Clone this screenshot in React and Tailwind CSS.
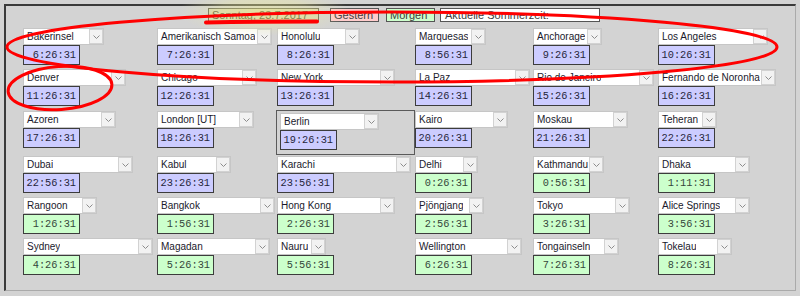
import React from 'react';

const B = 'blue';
const G = 'green';

const rows = [
  [
    ['Bakerinsel', 'w-[81px]', '6:26:31', B],
    ['Amerikanisch Samoa', 'w-[115px]', '7:26:31', B],
    ['Honolulu', 'w-[83px]', '8:26:31', B],
    ['Marquesas', 'w-[71px]', '8:56:31', B],
    ['Anchorage', 'w-[69px]', '9:26:31', B],
    ['Los Angeles', 'w-[110px]', '10:26:31', B],
  ],
  [
    ['Denver', 'w-[103px]', '11:26:31', B],
    ['Chicago', 'w-[100px]', '12:26:31', B],
    ['New York', 'w-[118px]', '13:26:31', B],
    ['La Paz', 'w-[115px]', '14:26:31', B],
    ['Rio de Janeiro', 'w-[121px]', '15:26:31', B],
    ['Fernando de Noronha', 'w-[118px]', '16:26:31', B],
  ],
  [
    ['Azoren', 'w-[93px]', '17:26:31', B],
    ['London [UT]', 'w-[97px]', '18:26:31', B],
    ['Berlin', 'w-[99px]', '19:26:31', B, true],
    ['Kairo', 'w-[93px]', '20:26:31', B],
    ['Moskau', 'w-[95px]', '21:26:31', B],
    ['Teheran', 'w-[59px]', '22:26:31', B],
  ],
  [
    ['Dubai', 'w-[110px]', '22:56:31', B],
    ['Kabul', 'w-[74px]', '23:26:31', B],
    ['Karachi', 'w-[134px]', '23:56:31', B],
    ['Delhi', 'w-[63px]', '0:26:31', G],
    ['Kathmandu', 'w-[71px]', '0:56:31', G],
    ['Dhaka', 'w-[92px]', '1:11:31', G],
  ],
  [
    ['Rangoon', 'w-[74px]', '1:26:31', G],
    ['Bangkok', 'w-[118px]', '1:56:31', G],
    ['Hong Kong', 'w-[118px]', '2:26:31', G],
    ['Pjöngjang', 'w-[69px]', '2:56:31', G],
    ['Tokyo', 'w-[97px]', '3:26:31', G],
    ['Alice Springs', 'w-[92px]', '3:56:31', G],
  ],
  [
    ['Sydney', 'w-[130px]', '4:26:31', G],
    ['Magadan', 'w-[113px]', '5:26:31', G],
    ['Nauru', 'w-[49px]', '5:56:31', G],
    ['Wellington', 'w-[107px]', '6:26:31', G],
    ['Tongainseln', 'w-[86px]', '7:26:31', G],
    ['Tokelau', 'w-[74px]', '8:26:31', G],
  ],
];

function Combo({ name, w }) {
  return (
    <div className={`flex h-[17px] items-center justify-between border border-[#c6c6c6] bg-white ${w}`}>
      <span className="overflow-hidden whitespace-nowrap pl-[3px] text-[10px] leading-none text-[#1a1a2c]">{name}</span>
      <span className="flex h-[15px] w-[14px] shrink-0 items-center justify-center border border-[#d2d2d2] bg-[#f2f2f2]">
        <svg width="7" height="4" viewBox="0 0 7 4">
          <path d="M0.5 0.5 L3.5 3.5 L6.5 0.5" fill="none" stroke="#8c8c8c" strokeWidth="1" />
        </svg>
      </span>
    </div>
  );
}

function Time({ value, color }) {
  const tone = color === B ? 'bg-[#ccccff] text-[#26263a]' : 'bg-[#ccffcc] text-[#34463a]';
  return (
    <div
      className={`flex h-[20px] w-[57px] items-center justify-end border border-[#3c3c3c] pr-[3px] font-['Liberation_Mono','Courier_New',monospace] text-[10.3px] leading-none ${tone}`}
    >
      {value}
    </div>
  );
}

function Cell({ item }) {
  const [name, w, time, color, framed] = item;
  if (framed) {
    return (
      <div className="-ml-px -mt-px h-[45px] w-[139px] border border-[#5a5a5a] pl-[3px] pt-[2px]">
        <Combo name={name} w={w} />
        <Time value={time} color={color} />
      </div>
    );
  }
  return (
    <div className="flex flex-col items-start">
      <Combo name={name} w={w} />
      <Time value={time} color={color} />
    </div>
  );
}

export default function App() {
  return (
    <div className="relative h-[296px] w-[800px] overflow-hidden bg-[#d3d3d3] font-['Liberation_Sans',Arial,sans-serif]">
      <div className="relative ml-[4px] mt-[4px] h-[287px] w-[792px] border-b border-l-2 border-r border-t-2 border-b-[#aaaaaa] border-l-[#3a3a3a] border-r-[#aaaaaa] border-t-[#3a3a3a]">
        <div className="ml-[202px] mt-[2px] flex h-[14px] text-[11px] leading-none">
          <div className="flex w-[111px] items-center border border-[#5a5a4a] bg-[#d6d6b2] pl-[3px] text-[#46461e]">
            Sonntag, 23.7.2017
          </div>
          <div className="ml-[11px] flex w-[49px] items-center border border-[#555] bg-[#ffcccc] pl-[3px] text-[#3c3c3c]">
            Gestern
          </div>
          <div className="ml-[7px] flex w-[49px] items-center border border-[#555] bg-[#ccffcc] pl-[3px] text-[#3c3c3c]">
            Morgen
          </div>
          <div className="ml-[5px] flex w-[160px] items-center border border-[#555] bg-white pl-[4px] text-[#3c3c3c]">
            Aktuelle Sommerzeit:
          </div>
        </div>

        <div className="mt-[6px] grid grid-cols-[134px_120px_138px_118px_125px_1fr] grid-rows-[41px_42px_45px_41px_41px_38px] pl-[17px]">
          {rows.map((row) => row.map((item) => <Cell key={item[0]} item={item} />))}
        </div>
      </div>

      <svg className="pointer-events-none absolute left-0 top-0" width="800" height="296">
        <defs>
          <radialGradient id="glow" cx="0.5" cy="0.5" r="0.5">
            <stop offset="0" stopColor="#f2f08a" stopOpacity="0.45" />
            <stop offset="0.55" stopColor="#eeec9c" stopOpacity="0.35" />
            <stop offset="1" stopColor="#e6e6b0" stopOpacity="0" />
          </radialGradient>
        </defs>
        <ellipse cx="264" cy="12" rx="86" ry="24" fill="url(#glow)" />
        <ellipse cx="392" cy="47" rx="385" ry="35" fill="none" stroke="#ff0000" strokeWidth="3" />
        <ellipse cx="60" cy="88" rx="52" ry="21.5" fill="none" stroke="#ff0000" strokeWidth="3" transform="rotate(-4 60 88)" />
        <path d="M206 22.5 Q262 21.5 317 21.5" fill="none" stroke="#ff0000" strokeWidth="4" strokeLinecap="round" />
      </svg>
    </div>
  );
}
